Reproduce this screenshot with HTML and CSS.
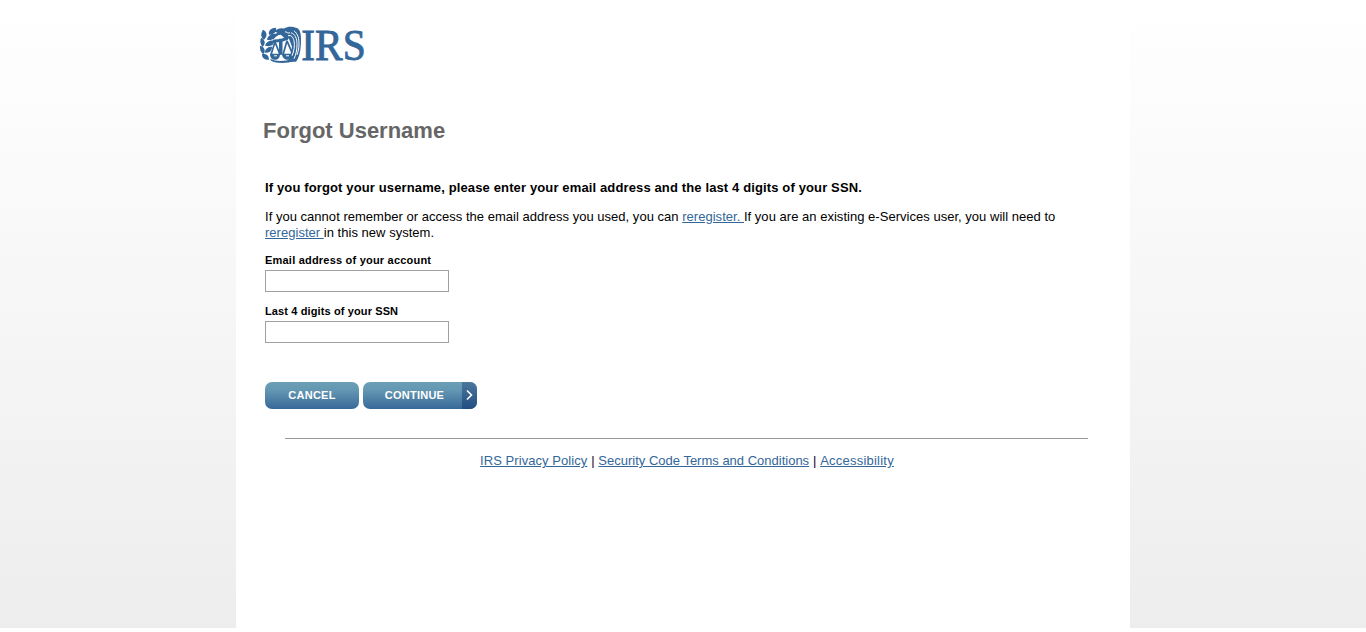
FILE: index.html
```html
<!DOCTYPE html>
<html lang="en">
<head>
<meta charset="utf-8">
<title>Forgot Username</title>
<link rel="stylesheet" href="styles.css">
</head>
<body>
<div class="backdrop">
<div class="page">
  <header class="masthead">
    <svg class="logo" width="120" height="50" viewBox="0 0 120 50" role="img" aria-label="IRS">
      <g transform="translate(0 .8)">
      <g fill="#336699">
        <path d="M9 9C8 5 11 2 16 2c1 4-2 7-7 7zM15 6c2-4 7-4 10-3-2 4-6 5-10 3zM4 14C0 11 1 7 3 4c4 2 5 6 1 10zM7 14c1-5 5-6 9-6 0 5-4 7-9 6zM3 21c-3-2-3-6-2-9 4 2 5 5 2 9zM5 20c1-4 5-6 9-5 0 5-4 6-9 5zM4 28c-4-1-4-5-4-8 4 1 6 4 4 8zM5 27c0-5 4-6 7-6 0 5-3 6-7 6zM9 34c-5 0-7-2-7-6 5 0 7 2 7 6z"/>
        <path d="M24 3c4-3 9-2 12-1 4 1 5 5 5 12 0 8-1 17-5 22h-5l-1-5 2-10-3-8-5-1-3-3c-3 0-6 2-8 5 1-6 6-9 11-11z"/>
        <path d="M13 14l8-1 7-2v3l-6 2-9 1zM19 13h3.500v16H19zM10 28h10c0 4-2 6-5 6s-5-2-5-6zM22 28h11c0 4-2 6-5 6s-6-2-6-6zM10 33c6 3 15 3 22 0l2 2c-6 3-18 3-23 0z"/>
      </g>
      <g fill="none" stroke="#336699" stroke-width="1.700">
        <path d="M15 16l-4 13M15 16l5 13M27 15l-4 14M27 15l6 14"/>
      </g>
      <g fill="none" stroke="#fff" stroke-width="1">
        <path d="M25 6c2 0 3 2 5 1M28 10c3-1 5 1 6 5 1 5 0 10-2 15M31 7c4 1 6 6 6 11 0 6-1 11-3 15M34 5c4 3 5 8 5 13 0 5-1 8-2 11M14 30h3M26 30h3"/>
      </g>
      </g>
      <text class="logo-word" x="41.200" y="35" textLength="64.500" lengthAdjust="spacingAndGlyphs">IRS</text>
    </svg>
  </header>
  <main class="content">
    <h1 class="title">Forgot Username</h1>
    <p class="lead">If you forgot your username, please enter your email address and the last 4 digits of your SSN.</p>
    <p class="note">If you cannot remember or access the email address you used, you can <a class="link" href="#">reregister. </a>If you are an existing e-Services user, you will need to<br><a class="link" href="#">reregister </a>in this new system.</p>
    <form class="form">
      <label class="label label-email" for="email">Email address of your account</label>
      <input class="field" id="email" type="text">
      <label class="label label-ssn" for="ssn">Last 4 digits of your SSN</label>
      <input class="field" id="ssn" type="text">
      <div class="actions">
        <button class="button cancel" type="button">CANCEL</button>
        <button class="button continue" type="button"><span class="continue-text">CONTINUE</span><span class="arrow"><svg width="8" height="12" viewBox="0 0 8 12"><path d="M1 1.500L5.500 6 1 10.500" fill="none" stroke="#fff" stroke-width="1.600"/></svg></span></button>
      </div>
    </form>
  </main>
  <footer class="footer"><a class="link policy" href="#">IRS Privacy Policy</a> <span class="bar">|</span> <a class="link" href="#">Security Code Terms and Conditions</a> <span class="bar">|</span> <a class="link access" href="#">Accessibility</a></footer>
</div>
</div>
</body>
</html>
```
FILE: styles.css
```css
* { box-sizing: border-box; }
body { margin: 0; background: #fff; color: #000; font: 13px/16px "Liberation Sans", Arial, sans-serif; }
.backdrop { height: 628px; background: linear-gradient(#fff, #ededed); }
.page { width: 894px; height: 628px; margin: 0 auto; background: #fff; }
.masthead { height: 117px; padding: 25px 0 0 24px; }
.logo { display: block; overflow: visible; }
.logo-word { font: 45px/50px "Liberation Serif", serif; fill: #336699; stroke: #336699; stroke-width: .9px; }
.content { padding-left: 29px; }
.title { margin: 0 0 0 -2px; font-size: 22px; line-height: 28px; color: #666; }
.lead { margin: 35px 0 0; font-weight: bold; white-space: nowrap; letter-spacing: .132px; }
.note { margin: 13px 0 0; white-space: nowrap; letter-spacing: .025px; }
.link { color: #336699; text-decoration: underline; }
.form { display: flex; flex-direction: column; align-items: flex-start; padding-top: 12px; }
.label { font-size: 11px; line-height: 14px; font-weight: bold; }
.label-email { letter-spacing: .21px; }
.label-ssn { margin-top: 12px; letter-spacing: .12px; }
.field { width: 184px; height: 22px; margin: 3px 0 0; border: 1px solid #a0a0a0; background: #fff; padding: 1px 3px; }
.actions { display: flex; gap: 4px; margin-top: 39px; }
.button { display: flex; align-items: center; justify-content: center; height: 27px; padding: 0; border: 0; border-radius: 7px; overflow: hidden; color: #fff; background: linear-gradient(#6b9fb5, #6497b2 30%, #376899); font: bold 11px/27px "Liberation Sans", Arial, sans-serif; letter-spacing: .25px; }
.cancel { width: 94px; }
.continue { width: 114px; }
.continue-text { flex: 1; padding-left: 4px; }
.arrow { display: flex; align-items: center; justify-content: center; width: 15px; height: 27px; padding-bottom: 1px; background: linear-gradient(#4b789c, #224d82); }
.footer { width: 803px; margin: 29px 0 0 49px; padding: 14px 0 0 1px; border-top: 1px solid #999; text-align: center; white-space: nowrap; }
.bar { margin: 0 .2px; color: #200020; }
.policy { letter-spacing: .06px; }
.access { letter-spacing: .23px; }
```
